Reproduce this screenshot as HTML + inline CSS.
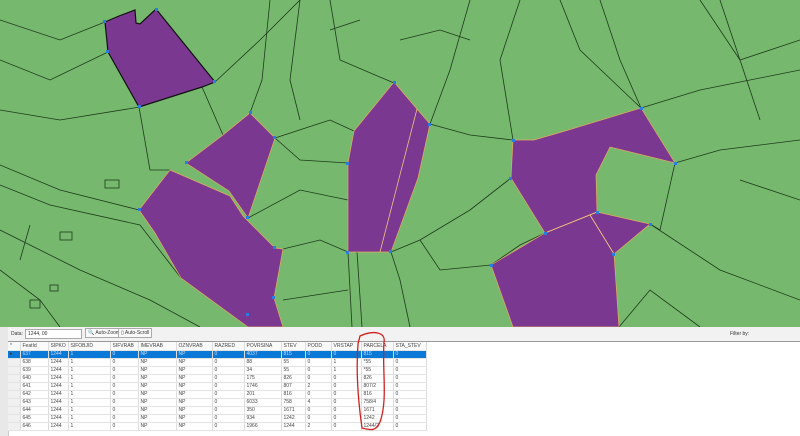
<!DOCTYPE html>
<html><head><meta charset="utf-8"><style>
body{margin:0;width:800px;height:436px;overflow:hidden;background:#fff;font-family:"Liberation Sans",sans-serif;position:relative}
#map{position:absolute;left:0;top:0}
#side{position:absolute;left:0;top:327px;width:8px;height:109px;background:#e8e8e8;border-right:1px solid #ccc}
#tb{position:absolute;left:8px;top:327px;width:792px;height:14px;background:#f2f2f2;border-bottom:1px solid #999;font-size:5px;color:#333}
#tb span{position:absolute;top:4px}
table{position:absolute;left:8px;top:342px;border-collapse:collapse;table-layout:fixed;width:418px;font-size:5px;color:#444}
td{height:7px;padding:0 0 0 2px;border-right:1px solid #ddd;border-bottom:1px solid #e4e4e4;white-space:nowrap;overflow:hidden;line-height:7px}
tr.h td{background:#fafafa;height:8px}
tr.s td{background:#0a78d7;color:#cde}
td.i{background:#f0f0f0}
</style></head><body>
<svg id="map" width="800" height="327" viewBox="0 0 800 327">
<rect width="800" height="327" fill="#76b86d"/>
<g fill="none" stroke="#1e3a1c" stroke-width="0.8">
<path d="M0 20 L60 40 L105 22"/><path d="M0 60 L50 80 L108 52"/><path d="M0 110 L60 120 L140 107"/>
<path d="M139 107 L150 170 L170 170"/><path d="M202 87 L223 135"/><path d="M215 82 L260 40 L300 0"/>
<path d="M250 113 L262 80 L270 0"/><path d="M275 138 L330 120 L354 131"/><path d="M275 138 L300 160 L348 163"/>
<path d="M0 165 L60 190 L139 210"/><path d="M0 185 L50 205 L140 225 L181 278"/><path d="M0 230 L80 270 L150 300 L200 327"/>
<path d="M0 270 L40 300 L60 327"/><path d="M30 225 L20 260"/><path d="M283 249 L320 240 L348 252"/>
<path d="M248 218 L300 190 L348 200"/><path d="M283 300 L348 290"/><path d="M300 0 L290 80 L300 120"/>
<path d="M330 0 L340 60 L394 83"/><path d="M430 124 L470 135 L513 140"/><path d="M430 124 L450 70 L470 0"/>
<path d="M511 178 L470 210 L420 240 L391 252"/><path d="M545 233 L520 245 L491 265"/><path d="M348 252 L352 327"/><path d="M357 252 L362 327"/>
<path d="M391 252 L400 280 L410 327"/><path d="M420 240 L440 270 L491 265"/><path d="M641 108 L620 60 L600 0"/>
<path d="M641 108 L700 90 L800 70"/><path d="M675 163 L720 150 L800 140"/><path d="M675 163 L660 230 L650 224"/>
<path d="M650 224 L720 270 L800 300"/><path d="M619 327 L650 290 L700 327"/><path d="M513 140 L500 60 L520 0"/>
<path d="M560 0 L580 50 L641 108"/><path d="M700 0 L740 60 L800 40"/><path d="M740 180 L800 200"/>
<path d="M400 40 L440 30 L470 40"/><path d="M330 30 L360 20"/><path d="M720 0 L760 120"/>
<rect x="60" y="232" width="12" height="8"/><rect x="30" y="300" width="10" height="8"/><rect x="105" y="180" width="14" height="8"/><rect x="50" y="285" width="8" height="6"/>
</g>
<g fill="#7b3890" stroke="#e8a860" stroke-width="0.7">
<polygon points="105,22 119,16 135,10 136,23 140,24 156,9 215,82 202,87 139,107 108,52" stroke="#111" stroke-width="1.2"/>
<polygon points="250,113 275,138 248,218 229,191 186,163 223,135"/>
<polygon points="170,170 230,196 243,216 275,248 283,249 274,298 283,327 248,327 181,278 155,233 139,210"/>
<polygon points="394,82 417,109 430,124 418,178 391,252 348,252 348,163 354,131"/>
<polygon points="513,140 534,140 565,131 641,108 675,163 610,147 596,175 597,212 545,233 511,178"/>
<polygon points="597,212 650,224 614,254 590,215"/>
<polygon points="545,233 590,215 614,254 619,327 513,327 491,265"/>
</g>
<g stroke="#f0c080" stroke-width="0.8"><line x1="417" y1="109" x2="380" y2="252"/><line x1="545" y1="233" x2="597" y2="212"/><line x1="590" y1="215" x2="614" y2="254"/></g>
<g fill="#2a7de0">
<rect x="103" y="20" width="3" height="3"/><rect x="155" y="8" width="3" height="3"/><rect x="213" y="80" width="3" height="3"/><rect x="138" y="105" width="3" height="3"/><rect x="106" y="50" width="3" height="3"/>
<rect x="249" y="111" width="3" height="3"/><rect x="273" y="136" width="3" height="3"/><rect x="246" y="216" width="3" height="3"/><rect x="185" y="161" width="3" height="3"/>
<rect x="138" y="208" width="3" height="3"/><rect x="273" y="246" width="3" height="3"/><rect x="272" y="296" width="3" height="3"/><rect x="246" y="313" width="3" height="3"/>
<rect x="393" y="81" width="3" height="3"/><rect x="428" y="123" width="3" height="3"/><rect x="346" y="162" width="3" height="3"/><rect x="346" y="251" width="3" height="3"/><rect x="389" y="250" width="3" height="3"/>
<rect x="512" y="139" width="3" height="3"/><rect x="640" y="107" width="3" height="3"/><rect x="674" y="162" width="3" height="3"/><rect x="509" y="177" width="3" height="3"/><rect x="544" y="232" width="3" height="3"/>
<rect x="596" y="211" width="3" height="3"/><rect x="649" y="223" width="3" height="3"/><rect x="612" y="253" width="3" height="3"/><rect x="490" y="264" width="3" height="3"/>
</g>
</svg>
<div id="side"></div>
<div id="tb"><span style="left:3px">Data:</span><span style="left:17px;top:2px;width:53px;height:8px;background:#fff;border:1px solid #aaa;padding-left:2px;line-height:8px">1244, 00</span><span style="left:77px;top:1px;border:1px solid #aaa;padding:1px 2px;background:#fafafa">🔍 Auto-Zoom</span><span style="left:110px;top:1px;border:1px solid #aaa;padding:1px 2px;background:#fafafa">▯ Auto-Scroll</span><span style="left:722px">Filter by:</span></div>
<table>
<colgroup><col style="width:12px"><col style="width:28px"><col style="width:20px"><col style="width:42px"><col style="width:28px"><col style="width:38px"><col style="width:36px"><col style="width:32px"><col style="width:37px"><col style="width:24px"><col style="width:26px"><col style="width:30px"><col style="width:32px"><col style="width:33px"></colgroup>
<tr class="h"><td class="i">*</td><td>FeatId</td><td>SIPKO</td><td>SIFOBJID</td><td>SIFVRAB</td><td>IMEVRAB</td><td>OZNVRAB</td><td>RAZRED</td><td>POVRSINA</td><td>STEV</td><td>PODD</td><td>VRSTAP</td><td>PARCELA</td><td>STA_STEV</td></tr>
<tr class="s"><td class="i" style="color:#333">▸</td><td>637</td><td>1244</td><td>1</td><td>0</td><td>NP</td><td>NP</td><td>0</td><td>4037</td><td>815</td><td>0</td><td>0</td><td>815</td><td>0</td></tr>
<tr><td class="i"></td><td>638</td><td>1244</td><td>1</td><td>0</td><td>NP</td><td>NP</td><td>0</td><td>88</td><td>55</td><td>0</td><td>1</td><td>*55</td><td>0</td></tr>
<tr><td class="i"></td><td>639</td><td>1244</td><td>1</td><td>0</td><td>NP</td><td>NP</td><td>0</td><td>34</td><td>55</td><td>0</td><td>1</td><td>*55</td><td>0</td></tr>
<tr><td class="i"></td><td>640</td><td>1244</td><td>1</td><td>0</td><td>NP</td><td>NP</td><td>0</td><td>175</td><td>826</td><td>0</td><td>0</td><td>826</td><td>0</td></tr>
<tr><td class="i"></td><td>641</td><td>1244</td><td>1</td><td>0</td><td>NP</td><td>NP</td><td>0</td><td>1746</td><td>807</td><td>2</td><td>0</td><td>807/2</td><td>0</td></tr>
<tr><td class="i"></td><td>642</td><td>1244</td><td>1</td><td>0</td><td>NP</td><td>NP</td><td>0</td><td>201</td><td>816</td><td>0</td><td>0</td><td>816</td><td>0</td></tr>
<tr><td class="i"></td><td>643</td><td>1244</td><td>1</td><td>0</td><td>NP</td><td>NP</td><td>0</td><td>6033</td><td>758</td><td>4</td><td>0</td><td>758/4</td><td>0</td></tr>
<tr><td class="i"></td><td>644</td><td>1244</td><td>1</td><td>0</td><td>NP</td><td>NP</td><td>0</td><td>350</td><td>1671</td><td>0</td><td>0</td><td>1671</td><td>0</td></tr>
<tr><td class="i"></td><td>645</td><td>1244</td><td>1</td><td>0</td><td>NP</td><td>NP</td><td>0</td><td>934</td><td>1242</td><td>0</td><td>0</td><td>1242</td><td>0</td></tr>
<tr><td class="i"></td><td>646</td><td>1244</td><td>1</td><td>0</td><td>NP</td><td>NP</td><td>0</td><td>1966</td><td>1244</td><td>2</td><td>0</td><td>1244/2</td><td>0</td></tr>
</table>
<svg style="position:absolute;top:330px;left:348px" width="45" height="106"><path d="M12 6 C25 0 38 2 36 12 C34 40 40 70 32 92 C28 102 22 100 14 98 C10 70 8 40 10 14 Z" fill="none" stroke="#d02020" stroke-width="1.3"/></svg>
</body></html>
